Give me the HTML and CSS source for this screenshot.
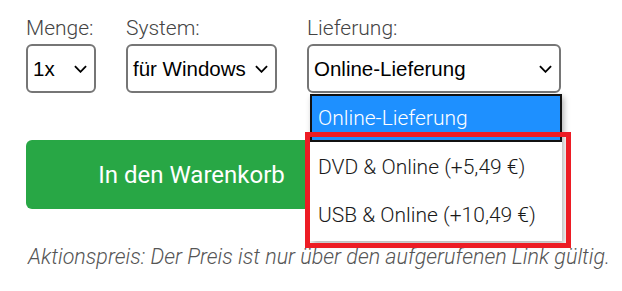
FILE: index.html
```html
<!DOCTYPE html>
<html lang="de">
<head>
<meta charset="utf-8">
<title>Bestellung</title>
<link rel="stylesheet" href="styles.css">
</head>
<body>
<div class="page">
  <div class="row">
    <div class="field">
      <span class="label">Menge:</span>
      <div class="select sel-qty"><span>1x</span><svg class="chev" viewBox="0 0 14 8"><path d="M1 1l6 6 6-6"/></svg></div>
    </div>
    <div class="field">
      <span class="label">System:</span>
      <div class="select sel-sys"><span>für Windows</span><svg class="chev" viewBox="0 0 14 8"><path d="M1 1l6 6 6-6"/></svg></div>
    </div>
    <div class="field">
      <span class="label">Lieferung:</span>
      <div class="select sel-del"><span>Online-Lieferung</span><svg class="chev" viewBox="0 0 14 8"><path d="M1 1l6 6 6-6"/></svg></div>
    </div>
  </div>
  <button class="cart">In den Warenkorb</button>
  <p class="note">Aktionspreis: Der Preis ist nur über den aufgerufenen Link gültig.</p>

  <ul class="dropdown">
    <li class="opt active">Online-Lieferung</li>
    <li class="opt">DVD &amp; Online (+5,49 €)</li>
    <li class="opt">USB &amp; Online (+10,49 €)</li>
  </ul>
  <div class="highlight"></div>
</div>
</body>
</html>
```
FILE: styles.css
```css
html, body {
  margin: 0;
  padding: 0;
  background: #fff;
}
.page {
  position: relative;
  width: 622px;
  height: 291px;
  box-sizing: border-box;
  padding: 16px 0 0 26px;
  font-family: Roboto, "Liberation Sans", sans-serif;
  overflow: hidden;
}
.row {
  display: flex;
  gap: 30px;
}
.field {
  display: flex;
  flex-direction: column;
  gap: 3px;
}
.label {
  font-weight: 300;
  font-size: 21px;
  line-height: 25px;
  color: #444;
}
.select {
  box-sizing: border-box;
  height: 49px;
  border: 2px solid #767676;
  border-radius: 6px;
  padding: 0 7px 0 5px;
  display: flex;
  align-items: center;
  justify-content: space-between;
  font-family: "Liberation Sans", Arial, sans-serif;
  font-size: 20.5px;
  color: #000;
  background: #fff;
}
.sel-qty { width: 70px; }
.sel-sys { width: 151px; }
.sel-del { width: 254px; }
.chev {
  width: 13px;
  height: 8px;
  fill: none;
  stroke: #000;
  stroke-width: 2;
}
.cart {
  display: block;
  margin-top: 47px;
  width: 331px;
  height: 69px;
  border: 0;
  border-radius: 6px;
  background: #28a745;
  color: #fff;
  font-family: Roboto, sans-serif;
  font-size: 24px;
  font-weight: 400;
}
.note {
  margin: 36px 0 0 2px;
  font-style: italic;
  font-weight: 300;
  font-size: 21.5px;
  line-height: 24px;
  color: #555;
}
.dropdown {
  position: absolute;
  left: 310px;
  top: 94px;
  width: 252px;
  margin: 0;
  padding: 0 0 3px;
  list-style: none;
  background: #fff;
  box-shadow: 2px 3px 6px rgba(0,0,0,0.3);
  box-sizing: border-box;
}
.opt {
  height: 48px;
  line-height: 51px;
  padding-left: 8px;
  font-weight: 300;
  font-size: 21px;
  color: #1a1a1a;
}
.opt.active {
  box-sizing: border-box;
  height: 48px;
  line-height: 45px;
  padding-left: 6px;
  border: 2px solid #111;
  background: #1e90ff;
  color: #fff;
}
.highlight {
  position: absolute;
  left: 305px;
  top: 132px;
  width: 266px;
  height: 116px;
  box-sizing: border-box;
  border: 5px solid #ed1c24;
}
```
